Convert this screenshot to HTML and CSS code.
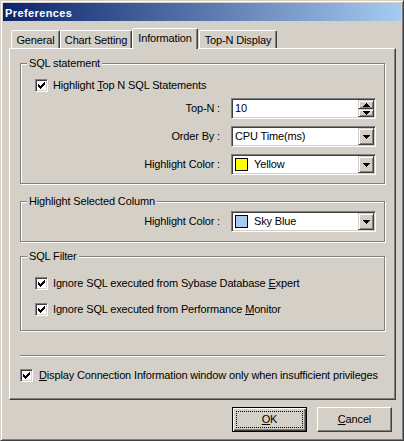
FILE: index.html
```html
<!DOCTYPE html>
<html>
<head>
<meta charset="utf-8">
<link rel="stylesheet" href="styles.css">
</head>
<body>
<div class="window">
  <div class="titlebar">Preferences</div>
  <div class="body">
    <div class="tabs">
      <div class="tab t-general">General</div>
      <div class="tab t-chart">Chart Setting</div>
      <div class="tab t-info sel">Information</div>
      <div class="tab t-topn">Top-N Display</div>
    </div>
    <div class="panel">
      <div class="group g1">
        <div class="legend">SQL statement</div>
        <div class="check c-top">
          <span class="box"><svg width="11" height="11" viewBox="0 0 11 11" shape-rendering="crispEdges"><path d="M8 2h1v1h-1z M7 3h2v1h-2z M2 4h1v1h-1z M6 4h3v1h-3z M2 5h2v1h-2z M5 5h3v1h-3z M2 6h5v1h-5z M3 7h3v1h-3z M4 8h1v1h-1z" fill="#000"/></svg></span>
          <span>Highlight <u>T</u>op N SQL Statements</span>
        </div>
        <div class="form f1">
          <span class="lbl">Top-N :</span>
          <div class="field">
            <span class="val">10</span>
            <span class="spin">
              <span class="sbtn up"><svg width="7" height="4" viewBox="0 0 7 4" shape-rendering="crispEdges"><path d="M3 0h1v1H3z M2 1h3v1H2z M1 2h5v1H1z M0 3h7v1H0z" fill="#000"/></svg></span>
              <span class="sbtn down"><svg width="7" height="4" viewBox="0 0 7 4" shape-rendering="crispEdges"><path d="M0 0h7v1H0z M1 1h5v1H1z M2 2h3v1H2z M3 3h1v1H3z" fill="#000"/></svg></span>
            </span>
          </div>
          <span class="lbl">Order By :</span>
          <div class="field">
            <span class="val">CPU Time(ms)</span>
            <span class="drop"><svg width="7" height="4" viewBox="0 0 7 4" shape-rendering="crispEdges"><path d="M0 0h7v1H0z M1 1h5v1H1z M2 2h3v1H2z M3 3h1v1H3z" fill="#000"/></svg></span>
          </div>
          <span class="lbl">Highlight Color :</span>
          <div class="field">
            <span class="swatch sw-yellow"></span>
            <span class="val nopad">Yellow</span>
            <span class="drop"><svg width="7" height="4" viewBox="0 0 7 4" shape-rendering="crispEdges"><path d="M0 0h7v1H0z M1 1h5v1H1z M2 2h3v1H2z M3 3h1v1H3z" fill="#000"/></svg></span>
          </div>
        </div>
      </div>

      <div class="group g2">
        <div class="legend">Highlight Selected Column</div>
        <div class="form f2">
          <span class="lbl">Highlight Color :</span>
          <div class="field">
            <span class="swatch sw-blue"></span>
            <span class="val nopad">Sky Blue</span>
            <span class="drop"><svg width="7" height="4" viewBox="0 0 7 4" shape-rendering="crispEdges"><path d="M0 0h7v1H0z M1 1h5v1H1z M2 2h3v1H2z M3 3h1v1H3z" fill="#000"/></svg></span>
          </div>
        </div>
      </div>

      <div class="group g3">
        <div class="legend">SQL Filter</div>
        <div class="check c-f1">
          <span class="box"><svg width="11" height="11" viewBox="0 0 11 11" shape-rendering="crispEdges"><path d="M8 2h1v1h-1z M7 3h2v1h-2z M2 4h1v1h-1z M6 4h3v1h-3z M2 5h2v1h-2z M5 5h3v1h-3z M2 6h5v1h-5z M3 7h3v1h-3z M4 8h1v1h-1z" fill="#000"/></svg></span>
          <span>Ignore SQL executed from Sybase Database <u>E</u>xpert</span>
        </div>
        <div class="check c-f2">
          <span class="box"><svg width="11" height="11" viewBox="0 0 11 11" shape-rendering="crispEdges"><path d="M8 2h1v1h-1z M7 3h2v1h-2z M2 4h1v1h-1z M6 4h3v1h-3z M2 5h2v1h-2z M5 5h3v1h-3z M2 6h5v1h-5z M3 7h3v1h-3z M4 8h1v1h-1z" fill="#000"/></svg></span>
          <span>Ignore SQL executed from Performance <u>M</u>onitor</span>
        </div>
      </div>

      <div class="sep"></div>

      <div class="check c-bottom">
        <span class="box"><svg width="11" height="11" viewBox="0 0 11 11" shape-rendering="crispEdges"><path d="M8 2h1v1h-1z M7 3h2v1h-2z M2 4h1v1h-1z M6 4h3v1h-3z M2 5h2v1h-2z M5 5h3v1h-3z M2 6h5v1h-5z M3 7h3v1h-3z M4 8h1v1h-1z" fill="#000"/></svg></span>
        <span><u>D</u>isplay Connection Information window only when insufficient privileges</span>
      </div>
    </div>

    <div class="buttons">
      <div class="btn default"><span class="focus"><u>O</u>K</span></div>
      <div class="btn"><span class="focus nofocus"><u>C</u>ancel</span></div>
    </div>
  </div>
</div>
</body>
</html>
```
FILE: styles.css
```css
* { box-sizing: border-box; }
html, body { margin: 0; padding: 0; }
body {
  width: 404px;
  height: 441px;
  overflow: hidden;
  background: #d4d0c8;
  font-family: "Liberation Sans", Arial, sans-serif;
  font-size: 11px;
  letter-spacing: -0.15px;
  color: #000;
}
u { text-decoration: underline; text-underline-offset: 1px; }

.window {
  width: 404px;
  height: 441px;
  border: 1px solid;
  border-color: #d4d0c8 #404040 #404040 #d4d0c8;
  box-shadow: inset 1px 1px 0 #fff, inset -1px -1px 0 #808080;
  padding: 2px;
  background: #d4d0c8;
}
.titlebar {
  height: 18px;
  line-height: 20px;
  background: linear-gradient(to right, #0a246a, #a6caf0);
  color: #fff;
  font-weight: bold;
  letter-spacing: 0.4px;
  padding-left: 2px;
  overflow: hidden;
  white-space: nowrap;
}
.body { padding: 0 5px 0 6px; }

.tabs {
  display: flex;
  align-items: flex-end;
  height: 20px;
  margin: 7px 0 0 2px;
}
.tab {
  height: 18px;
  border: 1px solid;
  border-bottom: 0;
  border-color: #fff #404040 transparent #fff;
  box-shadow: inset -1px 0 0 #808080;
  border-radius: 2px 2px 0 0;
  text-align: center;
  line-height: 13px;
  padding-top: 3px;
  white-space: nowrap;
  background: #d4d0c8;
}
.t-general { width: 49px; }
.t-chart { width: 72px; }
.t-info { width: 66px; }
.t-topn { width: 78px; margin-left: 1px; }
.tab.sel {
  height: 21px;
  margin-bottom: -1px;
  position: relative;
  z-index: 1;
}

.panel {
  width: 387px;
  height: 352px;
  border: 1px solid;
  border-color: #fff #404040 #404040 #fff;
  box-shadow: inset -1px -1px 0 #808080;
  padding: 0 10px;
}

.group {
  border: 1px solid #808080;
  box-shadow: inset 1px 1px 0 #fff, 1px 1px 0 #fff;
}
.g1 { margin-top: 14px; }
.g2 { margin-top: 17px; }
.g3 { margin-top: 14px; padding-bottom: 14px; }
.legend {
  display: table;
  margin: -7px 0 0 6px;
  padding: 0 2px;
  background: #d4d0c8;
  line-height: 13px;
  white-space: nowrap;
}

.check {
  display: flex;
  align-items: center;
  gap: 5px;
  line-height: 13px;
  white-space: nowrap;
}
.c-top { margin: 9px 0 0 14px; }
.c-f1 { margin: 14px 0 0 14px; }
.c-f2 { margin: 13px 0 0 14px; }
.c-bottom { margin-top: 12px; gap: 6px; }
.box {
  flex: none;
  width: 13px;
  height: 13px;
  background: #fff;
  border: 1px solid;
  border-color: #808080 #fff #fff #808080;
  box-shadow: inset 1px 1px 0 #404040, inset -1px -1px 0 #d4d0c8;
}
.box svg { display: block; }

.form {
  display: grid;
  grid-template-columns: 199px 145px;
  column-gap: 11px;
  row-gap: 7px;
  align-items: center;
  line-height: 13px;
}
.f1 { margin-top: 6px; padding-bottom: 8px; }
.f2 { margin-top: 3px; padding-bottom: 9px; }
.lbl { text-align: right; white-space: nowrap; }

.field {
  height: 21px;
  background: #fff;
  border: 1px solid;
  border-color: #808080 #fff #fff #808080;
  box-shadow: inset 1px 1px 0 #404040, inset -1px -1px 0 #d4d0c8;
  padding: 1px;
  display: flex;
  align-items: center;
}
.val { flex: 1; padding-left: 2px; white-space: nowrap; }
.val.nopad { padding-left: 0; }
.swatch {
  flex: none;
  width: 13px;
  height: 13px;
  border: 1px solid #000;
  margin: 0 6px 0 2px;
}
.sw-yellow { background: #ffff00; }
.sw-blue { background: #a6caf0; }

.drop, .sbtn {
  flex: none;
  display: block;
  width: 16px;
  background: #d4d0c8;
  border: 1px solid;
  border-color: #d4d0c8 #404040 #404040 #d4d0c8;
  box-shadow: inset 1px 1px 0 #fff, inset -1px -1px 0 #808080;
}
.drop { height: 17px; }
.drop svg { display: block; margin: 6px 0 0 4px; }
.spin { flex: none; display: flex; flex-direction: column; width: 16px; height: 17px; }
.sbtn.up { height: 9px; }
.sbtn.down { height: 8px; }
.sbtn svg { display: block; margin: 2px 0 0 4px; }
.sbtn.down svg { margin-top: 1px; }

.sep {
  height: 2px;
  border-top: 1px solid #808080;
  border-bottom: 1px solid #fff;
  margin-top: 24px;
}

.buttons {
  display: flex;
  justify-content: flex-end;
  gap: 10px;
  margin-top: 7px;
  padding-right: 4px;
}
.btn {
  width: 75px;
  height: 25px;
  border: 1px solid;
  border-color: #fff #404040 #404040 #fff;
  box-shadow: inset -1px -1px 0 #808080;
  padding: 3px;
  display: flex;
}
.btn.default {
  border-color: #000;
  box-shadow: inset 1px 1px 0 #fff, inset -1px -1px 0 #404040, inset -2px -2px 0 #808080;
}
.focus {
  flex: 1;
  display: flex;
  align-items: center;
  justify-content: center;
  border: 1px dotted #000;
  line-height: 13px;
}
.focus.nofocus { border-color: transparent; }
```
